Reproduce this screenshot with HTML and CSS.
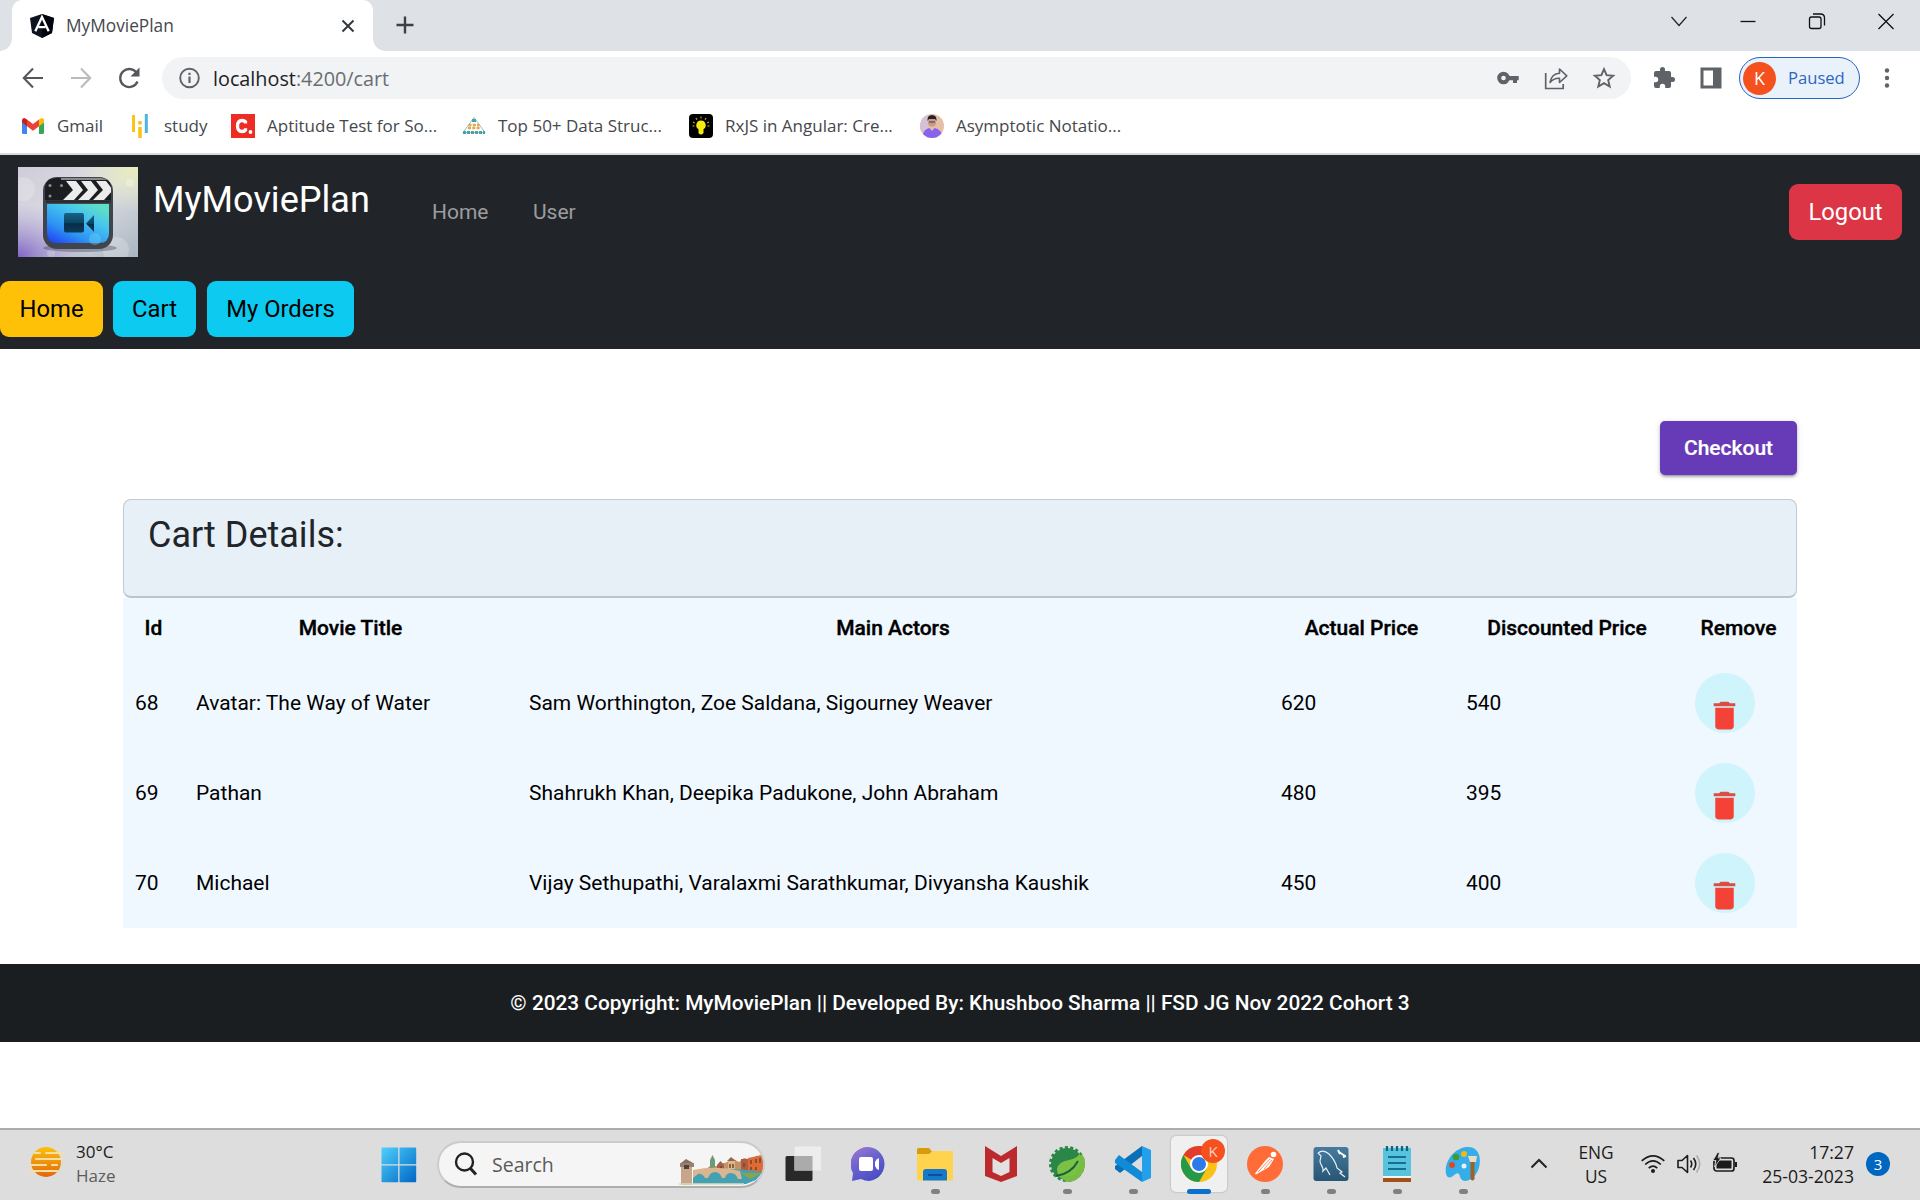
FILE: index.html
```html
<!DOCTYPE html>
<html lang="en">
<head>
<meta charset="utf-8">
<title>MyMoviePlan</title>
<link rel="stylesheet" href="styles.css">
</head>
<body>
<div class="tabstrip">
  <div class="tab">
    <svg class="i24" viewBox="0 0 24 24"><path d="M12 0 24 4 22 19 12 24 2 19 0 4z" fill="#0e1322"/><path d="M12 0 24 4 22 19 12 24z" fill="#02050d"/><path d="M5.3 17.3 12 3l6.7 14.3M8.5 13.2h7" fill="none" stroke="#fff" stroke-width="2.3"/></svg>
    <span class="tab-title">MyMoviePlan</span>
    <svg class="i24" viewBox="0 0 24 24"><path d="m6.5 6.5 11 11m0-11-11 11" stroke="#35383c" stroke-width="2"/></svg>
  </div>
  <svg class="newtab" viewBox="0 0 24 24"><path d="M12 3.5v17M3.5 12h17" stroke="#3c4043" stroke-width="2.4"/></svg>
  <div class="winctl">
    <svg class="i24" viewBox="0 0 24 24"><path d="m4.5 8 7.5 8.5L19.500 8" fill="none" stroke="#222" stroke-width="1.2"/></svg>
    <svg class="i24" viewBox="0 0 24 24"><path d="M4.500 12.500h15" stroke="#111" stroke-width="1.3"/></svg>
    <svg class="i24" viewBox="0 0 24 24"><rect x="4.500" y="8" width="11.500" height="11.500" rx="2" fill="none" stroke="#111" stroke-width="1.300"/><path d="M8 5h7.500q4 0 4 4v7.500" fill="none" stroke="#111" stroke-width="1.300"/></svg>
    <svg class="i24" viewBox="0 0 24 24"><path d="m4.500 5 15 15m0-15-15 15" stroke="#111" stroke-width="1.300"/></svg>
  </div>
</div>
<div class="toolbar">
  <div class="navicons">
    <svg class="i24" viewBox="0 0 24 24"><path d="M22 12H3m9-9.500L2.800 12l9.200 9.500" fill="none" stroke="#54575b" stroke-width="2.1"/></svg>
    <svg class="i24" viewBox="0 0 24 24"><path d="M2 12h19m-9-9.500 9.200 9.500-9.200 9.500" fill="none" stroke="#b9bbbe" stroke-width="2.100"/></svg>
    <svg class="i24" viewBox="0 0 24 24"><path d="M20.500 15.500A9 9 0 1 1 20 7.500" fill="none" stroke="#54575b" stroke-width="2.300"/><path d="M22.500 1.500v9h-9z" fill="#54575b"/></svg>
  </div>
  <div class="omnibox">
    <svg class="i24" viewBox="0 0 24 24"><circle cx="12.500" cy="12" r="9.300" fill="none" stroke="#5f6368" stroke-width="1.900"/><path d="M12.500 10.500v6.500M12.500 6.700v2.200" stroke="#5f6368" stroke-width="2.200"/></svg>
    <span class="url"><b>localhost</b>:4200/cart</span>
    <svg class="i24" viewBox="0 0 24 24"><circle cx="7.500" cy="12" r="4.300" fill="none" stroke="#5f6368" stroke-width="4"/><path d="M12 10h10.700v4.200H21V17h-4v-2.800h-5z" fill="#5f6368"/></svg>
    <svg class="i24" viewBox="0 0 24 24"><path d="M1.700 7v15.500h17.500V18" fill="none" stroke="#5f6368" stroke-width="1.700"/><path d="M6 16.500C7 10.500 10 7.500 15.500 7.200V3l7.300 6.800-7.300 6.700v-4.200C11 12 8.500 13.500 6 16.500z" fill="none" stroke="#5f6368" stroke-width="1.600" stroke-linejoin="round"/></svg>
    <svg class="i24" viewBox="0 0 24 24"><path d="m12 3.200 2.600 6 6.500.6-4.900 4.300 1.500 6.400-5.700-3.400-5.700 3.400 1.500-6.400L2.900 9.800l6.500-.6z" fill="none" stroke="#5f6368" stroke-width="1.900"/></svg>
  </div>
  <div class="exts">
    <svg class="i24" viewBox="0 0 24 24"><path d="M20.500 11H19V7a2 2 0 0 0-2-2h-4V3.500a2.500 2.500 0 0 0-5 0V5H4a2 2 0 0 0-2 2v3.800h1.500a2.700 2.700 0 0 1 0 5.400H2V20a2 2 0 0 0 2 2h3.800v-1.500a2.700 2.700 0 0 1 5.400 0V22H17a2 2 0 0 0 2-2v-4h1.500a2.500 2.500 0 0 0 0-5z" fill="#5f6368"/></svg>
    <svg class="i24" viewBox="0 0 24 24"><path d="M1.500 1.500h21v21h-21zM4.500 4.500v15H14v-15z" fill="#5f6368" fill-rule="evenodd"/></svg>
  </div>
  <div class="profile"><span class="avatar">K</span><span class="paused">Paused</span></div>
  <svg class="i24 menu" viewBox="0 0 24 24"><g fill="#5f6368"><circle cx="12" cy="4.500" r="2.200"/><circle cx="12" cy="12" r="2.200"/><circle cx="12" cy="19.500" r="2.200"/></g></svg>
</div>
<div class="bookmarks">
  <span class="bm"><svg class="i24" viewBox="0 0 24 24"><path d="M1 6v12.500q0 1.500 1.500 1.500H6V9z" fill="#4285f4"/><path d="M18 9v11h3.500q1.500 0 1.500-1.500V6z" fill="#34a853"/><path d="M1 6.500Q1 4 3.500 4L6 5.500v6.700L1 8.500z" fill="#c5221f"/><path d="M18 5.500 20.500 4Q23 4 23 6.500v2l-5 3.700z" fill="#fbbc04"/><path d="m6 5.500 6 4.600 6-4.600v6.700l-6 4.500-6-4.500z" fill="#ea4335"/></svg><span class="label">Gmail</span></span>
  <span class="bm"><svg class="i24" viewBox="0 0 24 24"><path d="M5.500 1v17" stroke="#fcc419" stroke-width="3"/><path d="M12 7v3.500M12 13v11" stroke="#f9c515" stroke-width="3.500"/><path d="M18.300 0v19" stroke="#4db3e6" stroke-width="3"/></svg><span class="label">study</span></span>
  <span class="bm"><svg class="i24" viewBox="0 0 24 24"><path d="M0 0h24v24H0z" fill="#ed2c24"/><path d="M14.500 9.500V7.800q-1-1.300-3.500-1.300-4.500 0-4.500 5.500t4.500 5.500q2.500 0 3.500-1.500v-1.800" fill="none" stroke="#fff" stroke-width="3.300"/><circle cx="19.500" cy="18" r="1.900" fill="#fff"/></svg><span class="label">Aptitude Test for So...</span></span>
  <span class="bm"><svg class="i24" viewBox="0 0 24 24"><g fill="none"><path d="m12 3.500-11 15h22z" stroke="#8cc5c4" stroke-width="1"/><path d="M10 6.500h4" stroke="#4aa3a5" stroke-width="3"/><path d="M6.500 11h11M6 14h12" stroke="#e2a64c" stroke-width="2.600" stroke-dasharray="3 1.300"/><path d="M1 18.500h22" stroke="#4aa3a5" stroke-width="3" stroke-dasharray="3 1"/></g></svg><span class="label">Top 50+ Data Struc...</span></span>
  <span class="bm"><svg class="i24" viewBox="0 0 24 24"><rect width="24" height="24" rx="4"/><path d="M12 6.500a4.700 4.700 0 0 0-2.500 8.700V19q2.500 3 5 0v-3.800A4.700 4.700 0 0 0 12 6.500z" fill="#f5ea14"/><path d="M12 2.500v2M7 4l1 1.600M17 4l-1 1.600M4 8l1.700 1M20 8l-1.700 1M3.500 12h2M18.500 12h2" stroke="#c5b410" stroke-width="1.100"/></svg><span class="label">RxJS in Angular: Cre...</span></span>
  <span class="bm"><svg class="i24 round" viewBox="0 0 24 24"><path d="M0 0h24v24H0z" fill="#e3bfa8"/><path d="M0 0h8v18H0z" fill="#d5c0d4"/><circle cx="12" cy="8.500" r="4" fill="#c99a8a"/><path d="M7.500 7Q7 1 12 1t4.500 6L15 5H9z" fill="#27202a"/><path d="M9 8h6" stroke="#4b3a42" stroke-width="1.200"/><path d="M2 24q1-9 7.500-10l2.500 3 2.500-3q7 1 8.500 10z" fill="#8863ef"/></svg><span class="label">Asymptotic Notatio...</span></span>
</div>

<header class="site-header">
  <nav class="navbar">
    <svg class="logo" viewBox="0 0 120 90">
      <defs>
        <linearGradient id="lb" x1="0" y1="0" x2="1" y2="1"><stop offset="0" stop-color="#cfccd8"/><stop offset=".5" stop-color="#dcdde4"/><stop offset="1" stop-color="#a9b6c1"/></linearGradient>
        <radialGradient id="lp" cx="0" cy="1" r=".6"><stop offset="0" stop-color="#8064c4"/><stop offset="1" stop-color="#a79bd0" stop-opacity="0"/></radialGradient>
        <radialGradient id="ly" cx="1" cy="0" r=".5"><stop offset="0" stop-color="#e9edb9"/><stop offset="1" stop-color="#e9edc4" stop-opacity="0"/></radialGradient>
        <linearGradient id="ls" x1="0" y1="1" x2=".8" y2="0"><stop offset="0" stop-color="#2038f5"/><stop offset=".35" stop-color="#2c93f3"/><stop offset=".7" stop-color="#46c4ee"/><stop offset="1" stop-color="#5fe0c4"/></linearGradient>
        <linearGradient id="lc" x1="0" y1="0" x2="0" y2="1"><stop offset="0" stop-color="#176387"/><stop offset=".5" stop-color="#0b4565"/><stop offset=".55" stop-color="#082c48"/><stop offset="1" stop-color="#0b3c5c"/></linearGradient>
        <clipPath id="cl"><path d="M39 11h43q11 0 11 11v11H27V22q0-11 12-11z"/></clipPath>
      </defs>
      <path d="M0 0h120v90H0z" fill="url(#lb)"/><path d="M0 0h120v90H0z" fill="url(#lp)"/><path d="M0 0h120v90H0z" fill="url(#ly)"/>
      <circle cx="5" cy="22" r="12" fill="#fff" opacity=".2"/><circle cx="98" cy="83" r="13" fill="#fff" opacity=".22"/><circle cx="112" cy="16" r="4" fill="#fff" opacity=".3"/><circle cx="33" cy="86" r="4" fill="#fff" opacity=".2"/>
      <ellipse cx="62" cy="81" rx="37" ry="4" fill="#35334a" opacity=".35"/>
      <rect x="25" y="10" width="70" height="72" rx="14" fill="#40454d"/>
      <g clip-path="url(#cl)"><path d="M25 10h70v24H25z" fill="#1c1d20"/><path d="M43 10h50v3H43z" fill="#8a8a8c"/><path d="M48 14h10l7 9-9 10H45l10-10zm15 0h10l7 9-9 10H60l10-10zm15 0h10l7 9-9 10H75l10-10z" fill="#ececec"/></g>
      <g fill="#8f9093"><circle cx="32" cy="18.500" r="1.500"/><circle cx="43.500" cy="18.500" r="1.500"/><circle cx="32" cy="29" r="1.500"/></g>
      <path d="M28 34.500h65" stroke="#24272c" stroke-width="2"/>
      <path d="M29 37h62v29q0 10-10 10H39q-10 0-10-10z" fill="url(#ls)"/>
      <circle cx="77" cy="72" r="6" fill="#6fd1f6" opacity=".4"/>
      <rect x="46" y="46" width="20" height="19.500" rx="2" fill="url(#lc)"/><path d="M76 48v17l-8-8.500z" fill="url(#lc)"/>
    </svg>
    <span class="brand">MyMoviePlan</span>
    <a class="nav-link">Home</a>
    <a class="nav-link">User</a>
    <button class="btn danger">Logout</button>
  </nav>
  <div class="subnav">
    <button class="btn warning">Home</button><button class="btn info cart">Cart</button><button class="btn info orders">My Orders</button>
  </div>
</header>

<main class="content">
  <button class="checkout">Checkout</button>
  <div class="card">Cart Details:</div>
  <table class="cart-table">
    <colgroup><col class="c1"><col class="c2"><col class="c3"><col class="c4"><col class="c5"><col class="c6"></colgroup>
    <tr class="head"><th>Id</th><th>Movie Title</th><th>Main Actors</th><th>Actual Price</th><th>Discounted Price</th><th>Remove</th></tr>
    <tr><td>68</td><td>Avatar: The Way of Water</td><td>Sam Worthington, Zoe Saldana, Sigourney Weaver</td><td>620</td><td>540</td><td><span class="remove"><svg viewBox="0 0 24 24"><path d="M6 19c0 1.100.900 2 2 2h8c1.100 0 2-.900 2-2V7H6v12z" fill="#f44336"/><path d="M19 4h-3.500l-1-1h-5l-1 1H5v2h14V4z" fill="#dd4c42"/></svg></span></td></tr>
    <tr><td>69</td><td>Pathan</td><td>Shahrukh Khan, Deepika Padukone, John Abraham</td><td>480</td><td>395</td><td><span class="remove"><svg viewBox="0 0 24 24"><path d="M6 19c0 1.100.900 2 2 2h8c1.100 0 2-.900 2-2V7H6v12z" fill="#f44336"/><path d="M19 4h-3.500l-1-1h-5l-1 1H5v2h14V4z" fill="#dd4c42"/></svg></span></td></tr>
    <tr><td>70</td><td>Michael</td><td>Vijay Sethupathi, Varalaxmi Sarathkumar, Divyansha Kaushik</td><td>450</td><td>400</td><td><span class="remove"><svg viewBox="0 0 24 24"><path d="M6 19c0 1.100.900 2 2 2h8c1.100 0 2-.900 2-2V7H6v12z" fill="#f44336"/><path d="M19 4h-3.500l-1-1h-5l-1 1H5v2h14V4z" fill="#dd4c42"/></svg></span></td></tr>
  </table>
</main>
<footer class="footer">© 2023 Copyright: MyMoviePlan || Developed By: Khushboo Sharma || FSD JG Nov 2022 Cohort 3</footer>

<div class="taskbar">
  <div class="weather">
    <svg viewBox="0 0 36 36"><defs><linearGradient id="sun" x1="0" y1="0" x2="0" y2="1"><stop offset="0" stop-color="#fcc20b"/><stop offset="1" stop-color="#e2660b"/></linearGradient></defs><circle cx="18" cy="18" r="15" fill="url(#sun)"/><g stroke="#f6dfa6" stroke-width="2.200" stroke-linecap="round"><path d="M7 9h5M18 9h17M8 15h26M2 21h16M24 21h5M1 27h28"/></g></svg>
    <div class="wtext"><div>30°C</div><div class="dim">Haze</div></div>
  </div>
  <svg class="start" viewBox="0 0 36 36"><defs><linearGradient id="win" x1="0" y1="0" x2="1" y2="1"><stop offset="0" stop-color="#4fd0fb"/><stop offset="1" stop-color="#0067c6"/></linearGradient></defs><path d="M.5 1.500q0-1 1-1h15.700v16.700H.5zM18.500.5h15.700q1 0 1 1v15.700H18.500zM.5 18.500h16.700v16.700H1.500q-1 0-1-1zM18.500 18.500h16.700v15.700q0 1-1 1H18.500z" fill="url(#win)"/></svg>
  <div class="search">
    <svg class="glass" viewBox="0 0 24 24"><circle cx="10.500" cy="10" r="8.500" fill="none" stroke="#222" stroke-width="2.400"/><path d="m16.500 16.500 5.500 6" stroke="#222" stroke-width="3"/></svg>
    <span class="placeholder">Search</span>
    <svg class="scene" viewBox="0 0 84 30">
      <path d="m26 15 5-4 8 0 3-3 4 0 8-4 6 3 5-4 8 2 4-4 7-1v19H26z" fill="#c59166"/><path d="M31 14V5l2.500-5L36 5v9z" fill="#6f9a77"/><path d="M38 10h7v7h-7zM62 4h7v13h-7z" fill="#b15c3f"/><path d="M49 6h7v11h-7z" fill="#e2b684"/><path d="m38 10 3.500-4 3.500 4zM48 6l4-4 5 4z" fill="#8e6a55"/><path d="M69 3 84 0v18H69z" fill="#df6a35"/><path d="M72 5v4M77 4v4M81 3v5M42 11v3M51 9v4M54 9v4M65 8v4M72 12v3M77 12v3" stroke="#6a463b" stroke-width="1.500"/>
      <path d="M14 17q30-6 70 0l-7 8-10 4H14z" fill="#44a0b2"/><path d="M62 18h21l-12 6z" fill="#8ba449"/><path d="M14 15q24-5 47 1l2 8h-4q-2-6-7-6t-6 5h-3q-2-6-7-6t-7 6h-3q-3-5-7-4l-5 4z" fill="#d8b790"/>
      <path d="M1 8h14v4H1z" fill="#9b806a"/><path d="M2 12h11v18H2z" fill="#c8a58b"/><path d="M2 8 7 4l7 4z" fill="#87705f"/><path d="M5 10h5v4H5z" fill="#4e4140"/><path d="M0 29h65" stroke="#d8ddb8" stroke-width="1.500"/>
    </svg>
  </div>
  <div class="apps">
    <span class="app"><svg viewBox="0 0 36 36"><rect x=".5" y="10" width="27" height="25" rx="1.500" fill="#292929"/><path d="M9.500.5H36v24H9.500z" fill="#ededed"/><path d="M9.500 10h18v14.500h-18z" fill="#ababab"/></svg></span>
    <span class="app"><svg viewBox="0 0 36 36"><defs><linearGradient id="ch" x1="0" y1="0" x2=".6" y2="1"><stop offset="0" stop-color="#a37bd0"/><stop offset=".5" stop-color="#6b62cf"/><stop offset="1" stop-color="#4a4fc5"/></linearGradient></defs><path d="m1 35 1-8A17 17 0 1 1 18 35q-4 0-8-2z" fill="url(#ch)"/><rect x="8" y="11" width="14" height="14" rx="2" fill="#fff"/><path d="M24 16q1-3 4-4v12q-3-1-4-4z" fill="#fff"/></svg></span>
    <span class="app run"><svg viewBox="0 0 36 36"><path d="M0 3.500Q0 2 1.500 2H12l3 3.500-3 4H0z" fill="#d99a0c"/><path d="M0 8h12l3.500-3H36v28q0 1.500-1.500 1.500h-33Q0 34.500 0 33z" fill="#ffd34e"/><path d="M6 34.500V26q0-3 3-3h18q3 0 3 3v8.500z" fill="#1678cb"/><path d="M11 29h14" stroke="#0b4c91" stroke-width="1.800"/></svg></span>
    <span class="app"><svg viewBox="0 0 36 36"><path d="m2 0 16 10L34 0v30l-16 6-16-6z" fill="#bd2a2e"/><path d="m9.500 12 8.500 5 8.500-5v14L18 30 9.500 26z" fill="#e2e0e0"/></svg></span>
    <span class="app run"><svg viewBox="0 0 36 36"><circle cx="18" cy="18" r="16" fill="#2b8748" stroke="#2b8748" stroke-width="4" stroke-dasharray="3 2.200"/><path d="M18 36A18 18 0 0 0 33 8L9 30z" fill="#78bd43"/><path d="M31 6Q30 12 20 14 9 16 8 23q0 4 2 6 13 5 19-6 3-8 2-17z" fill="#7bc144"/><path d="M7 30q15-2 22-15" fill="none" stroke="#17643b" stroke-width="2"/></svg></span>
    <span class="app run"><svg viewBox="0 0 36 36"><path d="m27 0 9 4v28l-9 4z" fill="#239fec"/><path d="M27 0v10L5 27l-5-4v-3z" fill="#0870b8"/><path d="m0 14 4-5 23 17v10L0 17z" fill="#118bd6"/></svg></span>
    <span class="app active"><svg viewBox="0 0 36 36"><circle cx="18" cy="18" r="18" fill="#fbc116"/><path d="M18 18 2.400 9A18 18 0 0 1 33.600 9H18z" fill="#e33b2e"/><path d="M2.400 9A18 18 0 0 0 18 36l7.800-13.500L18 26l-7.800-3.500z" fill="#279847"/><circle cx="18" cy="18" r="9" fill="#fff"/><circle cx="18" cy="18" r="7" fill="#2d7bea"/></svg><i class="kbadge">K</i></span>
    <span class="app run"><svg viewBox="0 0 36 36"><circle cx="18" cy="18" r="18" fill="#ff6c37"/><circle cx="26.500" cy="8.500" r="2.800" fill="#fff"/><path d="m22 11 5 2-5 8-13 7.500-1-1L18 15z" fill="#fff"/><path d="m11 26 12-13m-6 10 8-9" stroke="#ff8c65"/></svg></span>
    <span class="app run"><svg viewBox="0 0 36 36"><defs><linearGradient id="my" x1="0" y1="0" x2="0" y2="1"><stop offset="0" stop-color="#477b9f"/><stop offset="1" stop-color="#275574"/></linearGradient></defs><rect x=".5" y="1" width="35" height="34" rx="3" fill="url(#my)"/><path d="M5 7q5-4 11 1c5 5 7 9 8 14l5 4-2 1 5 4M5 7l3 3-1 5c0 4 4 6 3 10l3-3 4 7" fill="none" stroke="#e8f1f5" stroke-width="1.200"/><path d="m26 6 6 4M25 4l2 4M30 11l3-1" stroke="#fff" stroke-width="2"/></svg></span>
    <span class="app run"><svg viewBox="0 0 36 36"><path d="M4 31h28v5H4z" fill="#a2501c"/><path d="M4 29h28v3H4z" fill="#f7f5f1"/><path d="M4 2h28v28H4z" fill="#57c3dd"/><path d="M8 0v5M13 0v5M18 0v5M23 0v5M28 0v5" stroke="#0e6385" stroke-width="2.300"/><path d="M9 11h18M9 17h18M9 23h18" stroke="#176e92" stroke-width="1.800"/></svg></span>
    <span class="app run"><svg viewBox="0 0 36 36"><path d="M22 1C8 2-1 17 1 28q2 6 7 2 6-6 7 1 3 7 11 2c9-6 10-18 8-24Q31 0 22 1z" fill="#35ade9"/><circle cx="11" cy="11" r="3.300" fill="#3e9b32"/><circle cx="19" cy="8" r="3" fill="#f6b714"/><circle cx="7" cy="19" r="3" fill="#d74b2b"/><circle cx="19" cy="20" r="2.500" fill="#e4f2f8"/><path d="M25.500 16h4v17q-2 3-4 0z" fill="#9c6329"/><path d="M23 10h9l-1 6h-6z" fill="#eadcc3"/></svg></span>
  </div>
  <div class="tray">
    <svg class="i24" viewBox="0 0 24 24"><path d="m4.500 15.500 7.500-7.500 7.500 7.500" fill="none" stroke="#222" stroke-width="2"/></svg>
    <div class="lang"><div>ENG</div><div>US</div></div>
    <svg class="i24" viewBox="0 0 24 24"><g fill="none" stroke="#1c1c1c" stroke-width="1.700"><path d="M.7 8.800q11.300-10 22.600 0M4.200 12.500q7.800-7.200 15.600 0M7.700 16.200q4.300-4 8.600 0"/></g><circle cx="12" cy="19" r="2" fill="#1c1c1c"/></svg>
    <svg class="i24" viewBox="0 0 24 24"><g fill="none" stroke="#1c1c1c" stroke-width="1.600"><path d="M1 8.500h4l5.500-5v17l-5.500-5H1z" stroke-linejoin="round"/><path d="M13.500 8.500q2.500 3.500 0 7M16.500 6q4.500 6 0 12"/></g><path d="M19.500 3.500q6.500 8.500 0 17" fill="none" stroke="#aaa" stroke-width="1.500"/></svg>
    <svg class="i24" viewBox="0 0 24 24"><rect x="1" y="6" width="20" height="13" rx="2.500" fill="none" stroke="#1c1c1c" stroke-width="1.700"/><path d="M3.500 8.500h15v8h-15zM22 10h2v5h-2z" fill="#1c1c1c"/><path d="M4.500.5 0 8.500h3L1.500 15 8 6H5L6.500.5z" fill="#1c1c1c" stroke="#ddd" stroke-width=".8"/></svg>
    <div class="clock"><div>17:27</div><div>25-03-2023</div></div>
    <span class="count">3</span>
  </div>
</div>
</body>
</html>
```
FILE: styles.css
```css
* { box-sizing: border-box; }
body { margin: 0; width: 1920px; height: 1200px; overflow: hidden; background: #fff; font-family: Roboto, sans-serif; display: flex; flex-direction: column; }
svg { display: block; flex: none; }
button { border: 0; margin: 0; font-family: inherit; }
.i24 { width: 24px; height: 24px; }

/* browser window */
.tabstrip, .toolbar, .bookmarks, .taskbar { font-family: "Open Sans", sans-serif; flex: none; white-space: nowrap; }
.tabstrip { height: 51px; background: #dee1e6; display: flex; padding-left: 12px; }
.tab { position: relative; width: 361px; height: 51px; background: #fff; border-radius: 10px 10px 0 0; display: flex; align-items: center; padding: 0 13px 0 18px; }
.tab::before, .tab::after { content: ""; position: absolute; bottom: 0; width: 12px; height: 12px; }
.tab::before { left: -12px; background: radial-gradient(circle at 0 0, #dee1e6 11.5px, #fff 12px); }
.tab::after { right: -12px; background: radial-gradient(circle at 100% 0, #dee1e6 11.5px, #fff 12px); }
.tab-title { flex: 1; margin-left: 12px; font-size: 17.300px; color: #45484c; }
.newtab { width: 24px; height: 24px; margin: 13px 0 0 20px; }
.winctl { margin: 9px 22px 0 auto; display: flex; gap: 45px; }
.toolbar { height: 54px; display: flex; align-items: center; padding-left: 21px; }
.navicons { width: 141px; display: flex; gap: 24px; }
.omnibox { width: 1469px; height: 42px; border-radius: 21px; background: #f1f3f4; display: flex; align-items: center; gap: 24px; padding: 0 15px; }
.url { flex: 1; margin-left: -12px; font-size: 19.800px; color: #6a6e73; }
.url b { font-weight: 400; color: #202124; }
.exts { display: flex; gap: 23px; margin: 0 16px 0 21px; }
.profile { width: 121px; height: 42px; border: 1.5px solid #2563c4; border-radius: 21px; background: #e9f1fb; color: #2b66c3; font-size: 16.600px; display: flex; align-items: center; gap: 13px; padding-left: 3px; }
.paused { padding-bottom: 2px; }
.avatar { width: 33px; height: 33px; margin-right: -1px; border-radius: 50%; background: #f4511e; color: #fff; display: flex; align-items: center; justify-content: center; font-size: 18px; }
.menu { margin-left: 15px; }
.bookmarks { height: 50px; border-bottom: 2px solid #d9dadd; display: grid; grid-template-columns: 107px 103px 231px 227px 231px 300px; align-items: center; padding: 0 0 6px 21px; font-size: 17px; color: #45484c; }
.bm { display: flex; align-items: center; gap: 12px; }
.label { padding-bottom: 2px; }
.round { border-radius: 50%; }

/* site header */
.site-header { height: 194px; flex: none; background: #212529; padding-top: 12px; }
.navbar { height: 90px; display: flex; padding: 0 18px; }
.logo { width: 120px; height: 90px; }
.brand { margin-left: 15px; width: 279px; font-size: 36.100px; line-height: 42px; padding-top: 12px; color: #fff; }
.nav-link { width: 101px; font-size: 21px; line-height: 24px; padding-top: 33px; color: #9b9d9f; }
.btn { height: 56px; border-radius: 9px; font-size: 23.800px; padding: 0; }
.danger { width: 113px; margin: 17px 0 0 auto; background: #dc3545; color: #fff; }
.subnav { display: flex; margin-top: 24px; }
.warning { width: 103px; background: #ffc107; color: #000; }
.info { background: #0dcaf0; color: #000; }
.cart { width: 83px; margin: 0 11px 0 10px; }
.orders { width: 147px; }

/* cart */
.content { flex: none; padding: 72px 123px 36px; display: flex; flex-direction: column; }
.checkout { align-self: flex-end; width: 137px; height: 54px; margin-bottom: 24px; border-radius: 5px; background: #673ab7; color: #fff; font-size: 21px; font-weight: 500; -webkit-text-stroke: .2px #fff; box-shadow: 0 3px 2px -2px #0003, 0 2px 3px #0003, 0 1px 6px #0002; }
.card { height: 99px; border: 1px solid #c5cad0; border-bottom: 2px solid #bcc3cb; border-radius: 8px; background: #e7eff7; font-size: 36px; line-height: 42px; padding: 14px 24px; color: #212529; }
.cart-table { table-layout: fixed; width: 1674px; border-collapse: collapse; background: #f0f8ff; color: #000; font-size: 20.970px; }
.c1 { width: 61px; } .c2 { width: 333px; } .c3 { width: 752px; } .c4 { width: 185px; } .c5 { width: 226px; } .c6 { width: 117px; }
.cart-table tr { height: 90px; }
.cart-table tr.head { height: 60px; }
.cart-table th { padding: 0; font-weight: 500; -webkit-text-stroke: .4px #000; }
.cart-table td { padding: 0 0 0 12px; white-space: nowrap; }
.remove { display: flex; justify-content: center; width: 60px; height: 60px; margin-left: 3px; padding: 24px 1px 0 0; border-radius: 50%; background: #cff4fc; }
.remove svg { width: 37px; height: 37px; }
.footer { flex: none; height: 78px; background: #1a1e21; color: #fff; font-size: 20.820px; font-weight: 500; display: flex; align-items: center; justify-content: center; }

/* taskbar */
.taskbar { height: 72px; margin-top: auto; background: #dddddd; border-top: 2px solid #acacac; display: flex; align-items: center; font-size: 17px; line-height: 24px; color: #1b1b1b; padding-bottom: 2px; }
.weather { width: 381px; padding-left: 28px; display: flex; align-items: center; gap: 12px; }
.weather svg { width: 36px; height: 36px; margin-top: -4px; }
.dim { color: #5c5c5c; }
.start { width: 36px; height: 36px; margin-top: 1px; }
.search { width: 328px; height: 47px; margin: 0 5px 0 20px; border: 2px solid #cbcbcb; border-bottom-color: #aeaeae; border-radius: 24px; background: #f5f5f5; display: flex; align-items: center; padding-left: 15px; gap: 14px; overflow: hidden; font-size: 19.500px; color: #5a5a5a; }
.placeholder { padding-top: 1px; }
.glass { width: 24px; height: 24px; }
.scene { width: 84px; height: 30px; margin: 12px 0 0 auto; }
.apps { display: flex; }
.app { position: relative; width: 66px; height: 58px; display: flex; align-items: center; justify-content: center; }
.app > svg { width: 36px; height: 36px; }
.run::after, .active::after { content: ""; position: absolute; bottom: -1px; left: 29px; width: 9px; height: 5px; border-radius: 3px; background: #808080; }
.active::before { content: ""; position: absolute; left: 5px; top: 1px; width: 56px; height: 56px; background: #f0f0f0; border-radius: 5px; box-shadow: 0 0 2px #999; }
.active > svg { position: relative; }
.active::after { left: 21px; width: 24px; background: #0b70cb; }
.kbadge { position: absolute; left: 35px; top: 4px; width: 24px; height: 24px; border-radius: 50%; background: #f4511e; color: #ffd0bd; font-size: 15px; line-height: 24px; text-align: center; font-style: normal; }
.tray { flex: 1; display: flex; align-items: center; padding-left: 31px; gap: 12px; }
.lang { width: 60px; text-align: center; margin: 2px 3px 0 3px; font-size: 17.300px; }
.clock { flex: 1; text-align: right; font-size: 17.600px; }
.count { width: 24px; height: 24px; margin-right: 30px; border-radius: 50%; background: #0067c0; color: #fff; text-align: center; font-size: 15px; }
```
